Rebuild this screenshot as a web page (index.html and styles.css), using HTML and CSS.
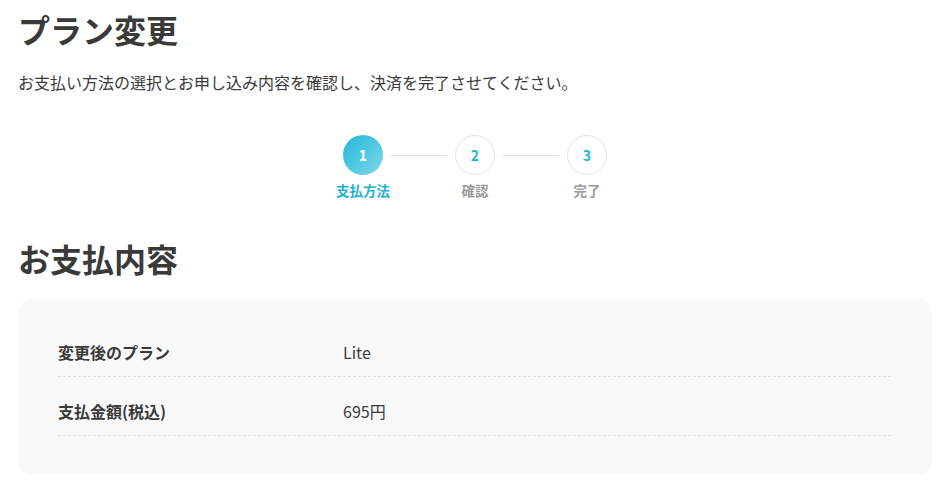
FILE: index.html
```html
<!DOCTYPE html>
<html lang="ja">
<head>
<meta charset="utf-8">
<link rel="stylesheet" href="styles.css">
</head>
<body>
<main class="page">
  <h1 class="title">プラン変更</h1>
  <p class="lead">お支払い方法の選択とお申し込み内容を確認し、決済を完了させてください。</p>
  <ol class="steps">
    <li class="step active"><span class="num">1</span><span class="label">支払方法</span></li>
    <li class="line"></li>
    <li class="step"><span class="num">2</span><span class="label">確認</span></li>
    <li class="line"></li>
    <li class="step"><span class="num">3</span><span class="label">完了</span></li>
  </ol>
  <h2 class="section">お支払内容</h2>
  <div class="card">
    <div class="row"><div class="key">変更後のプラン</div><div class="val">Lite</div></div>
    <div class="row"><div class="key">支払金額(税込)</div><div class="val">695円</div></div>
  </div>
</main>
</body>
</html>
```
FILE: styles.css
```css
* { box-sizing: border-box; }
html, body { margin: 0; padding: 0; background: #fff; }
body {
  font-family: "Noto Sans CJK JP", "Noto Sans", sans-serif;
  color: #3a3a3a;
}
.page { padding: 0 13px 0 18px; }
.title {
  margin: 0;
  padding-top: 9px;
  font-size: 32px;
  line-height: 40px;
  font-weight: 700;
  color: #3a3a3a;
}
.lead {
  margin: 21px 0 0;
  font-size: 16px;
  line-height: 24px;
  color: #3a3a3a;
}
.steps {
  list-style: none;
  margin: 41px 0 0;
  padding: 0;
  display: flex;
  justify-content: center;
  align-items: flex-start;
}
.step {
  width: 56px;
  display: flex;
  flex-direction: column;
  align-items: center;
}
.num {
  width: 40px;
  height: 40px;
  border-radius: 50%;
  border: 1px solid #e3e3e3;
  background: #fff;
  color: #25b4d2;
  font-size: 14px;
  font-weight: 700;
  display: flex;
  align-items: center;
  justify-content: center;
}
.step.active .num {
  border: none;
  background: linear-gradient(135deg, #20b8d8 0%, #7fd8e8 100%);
  color: #fff;
}
.label {
  margin-top: 5px;
  font-size: 13.5px;
  line-height: 20px;
  font-weight: 700;
  color: #9a9a9a;
  white-space: nowrap;
}
.step.active .label { color: #23b1cf; }
.line {
  width: 56px;
  height: 1px;
  background: #e0e0e0;
  margin-top: 20px;
}
.section {
  margin: 38px 0 0;
  font-size: 32px;
  line-height: 40px;
  font-weight: 700;
  color: #3a3a3a;
}
.card {
  margin-top: 21px;
  background: #f9f9f9;
  border-radius: 14px;
  padding: 19px 41px 39px 40px;
}
.row {
  display: flex;
  padding: 22px 0 12px;
  line-height: 24px;
  font-size: 16px;
  border-bottom: 1px dashed #e2e2e2;
}
.key {
  width: 285px;
  font-weight: 700;
  color: #3a3a3a;
}
.val { color: #3a3a3a; }
```
